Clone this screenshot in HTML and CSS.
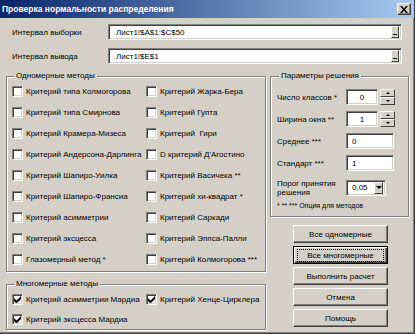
FILE: index.html
```html
<!DOCTYPE html>
<html lang="ru">
<head>
    <meta charset="UTF-8">
    <title>Проверка нормальности распределения</title>
    <link rel="stylesheet" href="styles.css">
</head>
<body>
    <div class="window">
        <div class="titlebar">
            <span class="title">Проверка нормальности распределения</span>
            <span class="close-btn">
                <svg width="8" height="7" viewBox="0 0 8 7"><path d="M0 0h2l2 2.5L6 0h2L5 3.5 8 7H6L4 4.5 2 7H0l3-3.5z" fill="#000"/></svg>
            </span>
        </div>
        <div class="body">
            <div class="ref-row">
                <label class="ref-label">Интервал выборки</label>
                <div class="ref-edit"><span class="ref-text">Лист1!$A$1:$C$50</span><span class="ref-btn"><i></i></span></div>
            </div>
            <div class="ref-row">
                <label class="ref-label">Интервал вывода</label>
                <div class="ref-edit"><span class="ref-text">Лист1!$E$1</span><span class="ref-btn"><i></i></span></div>
            </div>

            <div class="main">
                <div class="left">
                    <fieldset class="group uni">
                        <legend>Одномерные методы</legend>
                        <div class="checks">
                            <label class="check"><span class="box"></span>Критерий типа Колмогорова</label>
                            <label class="check"><span class="box"></span>Критерий Жарка-Бера</label>
                            <label class="check"><span class="box"></span>Критерий типа Смирнова</label>
                            <label class="check"><span class="box"></span>Критерий Гупта</label>
                            <label class="check"><span class="box"></span>Критерий Крамера-Мизеса</label>
                            <label class="check"><span class="box"></span>Критерий&nbsp; Гири</label>
                            <label class="check"><span class="box"></span>Критерий Андерсона-Дарлинга</label>
                            <label class="check"><span class="box"></span>D критерий Д'Агостино</label>
                            <label class="check"><span class="box"></span>Критерий Шапиро-Уилка</label>
                            <label class="check"><span class="box"></span>Критерий Васичека **</label>
                            <label class="check"><span class="box"></span>Критерий Шапиро-Франсиа</label>
                            <label class="check"><span class="box"></span>Критерий хи-квадрат *</label>
                            <label class="check"><span class="box"></span>Критерий асимметрии</label>
                            <label class="check"><span class="box"></span>Критерий Саркади</label>
                            <label class="check"><span class="box"></span>Критерий эксцесса</label>
                            <label class="check"><span class="box"></span>Критерий Эппса-Палли</label>
                            <label class="check"><span class="box"></span>Глазомерный метод *</label>
                            <label class="check"><span class="box"></span>Критерий Колмогорова ***</label>
                        </div>
                    </fieldset>

                    <fieldset class="group multi">
                        <legend>Многомерные методы</legend>
                        <div class="checks">
                            <label class="check"><span class="box"><svg width="7" height="7" viewBox="0 0 7 7"><path d="M0 2v3l2 2h1l4-4V0L2.5 4.5z" fill="#000"/></svg></span>Критерий асимметрии Мардиа</label>
                            <label class="check"><span class="box"><svg width="7" height="7" viewBox="0 0 7 7"><path d="M0 2v3l2 2h1l4-4V0L2.5 4.5z" fill="#000"/></svg></span>Критерий Хенце-Цирклера</label>
                            <label class="check"><span class="box"><svg width="7" height="7" viewBox="0 0 7 7"><path d="M0 2v3l2 2h1l4-4V0L2.5 4.5z" fill="#000"/></svg></span>Критерий эксцесса Мардиа</label>
                        </div>
                    </fieldset>
                </div>

                <div class="right">
                    <fieldset class="group params-group">
                        <legend>Параметры решения</legend>
                        <div class="params">
                            <span class="param-label">Число классов *</span>
                            <div class="spin">
                                <span class="edit num">0</span>
                                <span class="spin-btns"><span class="spin-btn"><i class="arr-up"></i></span><span class="spin-btn"><i class="arr-down"></i></span></span>
                            </div>
                            <span class="param-label">Ширина окна **</span>
                            <div class="spin">
                                <span class="edit num">1</span>
                                <span class="spin-btns"><span class="spin-btn"><i class="arr-up"></i></span><span class="spin-btn"><i class="arr-down"></i></span></span>
                            </div>
                            <span class="param-label">Среднее ***</span>
                            <span class="edit wide">0</span>
                            <span class="param-label">Стандарт ***</span>
                            <span class="edit wide">1</span>
                            <span class="param-label two-line">Порог принятия<br>решения</span>
                            <div class="combo"><span class="combo-text">0,05</span><span class="combo-btn"><i class="arr-down"></i></span></div>
                        </div>
                        <div class="footnote">* ** *** Опция для методов</div>
                    </fieldset>

                    <div class="actions">
                        <button class="btn">Все одномерные</button>
                        <button class="btn focused"><span>Все многомерные</span></button>
                        <button class="btn">Выполнить расчет</button>
                        <button class="btn">Отмена</button>
                        <button class="btn">Помощь</button>
                    </div>
                </div>
            </div>
        </div>
    </div>
</body>
</html>
```

FILE: styles.css
```css
* { box-sizing: border-box; }
body { margin: 0; background: #fff; font-family: "Liberation Sans", Arial, sans-serif; font-size: 8px; color: #000; }

.window { width: 415px; height: 334px; background: #d4d0c8; border-right: 1px solid #404040; border-bottom: 1px solid #404040; box-shadow: inset -1px -1px 0 #808080; overflow: hidden; }

.titlebar { height: 18px; background: linear-gradient(to right, #0a246a, #a6caf0); display: flex; align-items: center; justify-content: space-between; padding: 0 3px 0 2px; }
.title { color: #fff; font-weight: bold; font-size: 8.5px; }
.close-btn { width: 14px; height: 12px; background: #d4d0c8; border: 1px solid; border-color: #fff #404040 #404040 #fff; box-shadow: inset -1px -1px 0 #808080; display: flex; align-items: center; justify-content: center; }

.body { padding: 6px 6px 0 6px; }

.ref-row { display: flex; align-items: center; height: 16px; margin-bottom: 8px; }
.ref-row + .ref-row { margin-bottom: 7px; }
.ref-label { width: 102px; padding-left: 6px; }
.ref-edit { width: 294px; height: 16px; background: #fff; border: 1px solid; border-color: #808080 #fff #fff #808080; box-shadow: inset 1px 1px 0 #404040, inset -1px -1px 0 #d4d0c8; display: flex; align-items: center; padding: 0 2px 0 7px; }
.ref-text { flex: 1; }
.ref-btn { width: 8px; height: 12px; background: #d4d0c8; border: 1px solid; border-color: #fff #404040 #404040 #fff; display: flex; align-items: flex-end; justify-content: center; padding-bottom: 2px; }
.ref-btn i { display: block; width: 4px; height: 1px; background: #000; }

.main { display: grid; grid-template-columns: 260px 139px; column-gap: 4px; }

.group { margin: 0; padding: 0 5px; border: 1px solid #808080; box-shadow: inset 1px 1px 0 #fff, 1px 1px 0 #fff; min-width: 0; }
.group legend { padding: 0 2px; margin-left: 2px; line-height: 10px; background: #d4d0c8; }

.checks { display: grid; grid-template-columns: 134px 1fr; grid-auto-rows: 21px; align-items: center; }
.check { display: flex; align-items: center; gap: 3px; white-space: nowrap; }
.box { width: 11px; height: 11px; flex: none; background: #fff; border: 1px solid; border-color: #808080 #fff #fff #808080; box-shadow: inset 1px 1px 0 #404040, inset -1px -1px 0 #d4d0c8; display: flex; align-items: center; justify-content: center; }

.uni { height: 201px; }
.multi { margin-top: 7px; }
.multi .checks { grid-auto-rows: 20px; }

.params-group { padding: 5px 6px 6px; }
.params { display: grid; grid-template-columns: 69px auto; grid-template-rows: 22px 22px 22px 22px 27px; align-items: center; }
.params .two-line { line-height: 9px; }

.edit { height: 16px; background: #fff; border: 1px solid; border-color: #808080 #fff #fff #808080; box-shadow: inset 1px 1px 0 #404040, inset -1px -1px 0 #d4d0c8; display: flex; align-items: center; }
.num { width: 32px; justify-content: center; }
.wide { width: 48px; padding-left: 5px; }
.spin { display: flex; gap: 2px; }
.spin-btns { width: 15px; height: 16px; display: flex; flex-direction: column; }
.spin-btn { flex: 1; background: #d4d0c8; border: 1px solid; border-color: #fff #404040 #404040 #fff; display: flex; align-items: center; justify-content: center; }
.arr-up { display: block; width: 0; height: 0; border-left: 2px solid transparent; border-right: 2px solid transparent; border-bottom: 2px solid #000; }
.arr-down { display: block; width: 0; height: 0; border-left: 2px solid transparent; border-right: 2px solid transparent; border-top: 2px solid #000; }

.combo { width: 40px; height: 16px; background: #fff; border: 1px solid; border-color: #808080 #fff #fff #808080; box-shadow: inset 1px 1px 0 #404040, inset -1px -1px 0 #d4d0c8; display: flex; align-items: center; padding: 2px 2px 2px 5px; }
.combo-text { flex: 1; }
.combo-btn { width: 9px; height: 12px; background: #d4d0c8; border: 1px solid; border-color: #fff #404040 #404040 #fff; display: flex; align-items: center; justify-content: center; }
.combo-btn .arr-down { border-left-width: 3px; border-right-width: 3px; border-top-width: 3px; }

.footnote { font-size: 7px; line-height: 9px; }

.actions { display: flex; flex-direction: column; gap: 3px; padding: 8px 0 0 23px; }
.btn { width: 95px; height: 18px; padding: 0; font: inherit; color: #000; white-space: nowrap; background: #d4d0c8; border: 1px solid; border-color: #fff #404040 #404040 #fff; box-shadow: inset -1px -1px 0 #808080; }
.btn.focused { border-color: #000; box-shadow: inset 1px 1px 0 #fff, inset -1px -1px 0 #404040, inset -2px -2px 0 #808080; }
.btn.focused span { outline: 1px dotted #000; outline-offset: 1px; padding: 0 8px; }
```
